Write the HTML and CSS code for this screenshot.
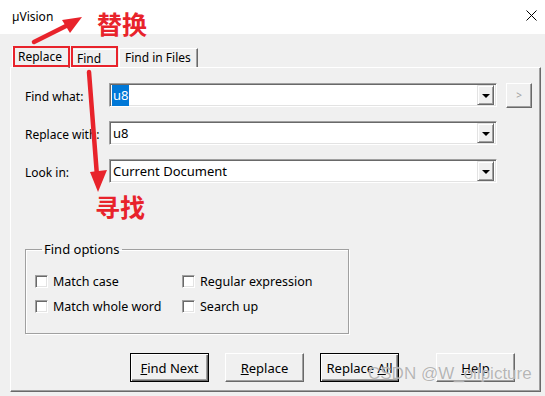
FILE: index.html
```html
<!DOCTYPE html>
<html lang="en">
<head>
    <meta charset="UTF-8">
    <title>µVision Replace</title>
    <link rel="stylesheet" href="styles.css">
</head>
<body>
    <div class="window">
        <div class="titlebar">
            <span class="title">µVision</span>
            <svg class="close" width="11" height="11" viewBox="0 0 11 11"><path d="M0.5 0.5L10.5 10.5M10.5 0.5L0.5 10.5" stroke="#000" stroke-width="1"/></svg>
        </div>
        <div class="tabs">
            <div class="tab active">Replace</div>
            <div class="tab tab-find">Find</div>
            <div class="tab">Find in Files</div>
        </div>
        <div class="panel">
            <div class="fields">
                <label>Find what:</label>
                <div class="combo"><span class="value"><span class="sel">u8</span></span><span class="drop"></span></div>
                <button class="more">&gt;</button>

                <label>Replace with:</label>
                <div class="combo"><span class="value">u8</span><span class="drop"></span></div>
                <span></span>

                <label>Look in:</label>
                <div class="combo"><span class="value">Current Document</span><span class="drop"></span></div>
                <span></span>
            </div>

            <fieldset class="options">
                <legend>Find options</legend>
                <div class="checks">
                    <div class="check"><span class="box"></span>Match case</div>
                    <div class="check"><span class="box"></span>Regular expression</div>
                    <div class="check"><span class="box"></span>Match whole word</div>
                    <div class="check"><span class="box"></span>Search up</div>
                </div>
            </fieldset>

            <div class="actions">
                <button class="btn default"><u>F</u>ind Next</button>
                <button class="btn"><u>R</u>eplace</button>
                <button class="btn default">Replace <u>A</u>ll</button>
                <button class="btn help"><u>H</u>elp</button>
            </div>
        </div>

        <!-- annotations drawn over the dialog -->
        <div class="note note-replace">替换</div>
        <div class="note note-find">寻找</div>
        <div class="redbox box-replace"></div>
        <div class="redbox box-find"></div>
        <svg class="arrows" width="545" height="396" viewBox="0 0 545 396">
            <line x1="34" y1="42" x2="68" y2="25" stroke="#e8232b" stroke-width="4.5" stroke-linecap="round"/>
            <polygon points="82,17 62,20 70,33" fill="#e8232b"/>
            <line x1="89" y1="72" x2="97" y2="176" stroke="#e8232b" stroke-width="4.5" stroke-linecap="round"/>
            <polygon points="98,192 90,172 107,170" fill="#e8232b"/>
        </svg>
        <div class="watermark">CSDN @W_oilpicture</div>
    </div>
</body>
</html>
```

FILE: styles.css
```css
body {
    margin: 0;
    font-family: "Noto Sans", "Noto Sans CJK SC", sans-serif;
    font-size: 12px;
    color: #000;
}
.window {
    position: relative;
    width: 545px;
    height: 396px;
    background-color: #f0f0f0;
    overflow: hidden;
}
.titlebar {
    height: 34px;
    background-color: #fff;
    display: flex;
    align-items: center;
    justify-content: space-between;
    padding: 0 8px 0 12px;
    box-sizing: border-box;
}
.title {
    font-size: 12px;
    margin-top: -2px;
}
.close {
    margin-top: -3px;
}
.tabs {
    display: flex;
    align-items: flex-end;
    height: 33px;
    padding-left: 12px;
    box-sizing: border-box;
}
.tab {
    height: 18px;
    line-height: 17px;
    padding: 0 6px 0 5px;
    border-top: 1px solid #fff;
    border-left: 1px solid #fff;
    border-right: 1px solid #696969;
    box-shadow: inset -1px 0 0 #a0a0a0;
    margin-left: 1px;
}
.tab.active {
    width: 58px;
    box-sizing: border-box;
    height: 21px;
    line-height: 18px;
    margin-left: 0;
    margin-bottom: -1px;
    position: relative;
    background-color: #f0f0f0;
}
.tab-find {
    width: 47px;
    box-sizing: border-box;
}
.panel {
    margin-left: 10px;
    width: 531px;
    height: 325px;
    box-sizing: border-box;
    border-top: 1px solid #fff;
    border-left: 1px solid #fff;
    border-right: 1px solid #696969;
    border-bottom: 1px solid #696969;
    box-shadow: inset -1px -1px 0 #a0a0a0;
    padding: 15px 0 0 14px;
}
.fields {
    display: grid;
    grid-template-columns: 75px 388px 26px;
    grid-auto-rows: 24px;
    column-gap: 9px;
    row-gap: 14px;
    align-items: center;
}
.fields label {
    margin-top: 2px;
    white-space: nowrap;
}
.combo {
    height: 24px;
    box-sizing: border-box;
    background-color: #fff;
    border-top: 1px solid #a0a0a0;
    border-left: 1px solid #a0a0a0;
    border-right: 1px solid #fff;
    border-bottom: 1px solid #fff;
    box-shadow: inset 1px 1px 0 #696969, inset -1px -1px 0 #e3e3e3;
    display: flex;
    align-items: center;
    justify-content: space-between;
    padding: 2px 2px 2px 3px;
}
.value {
    font-size: 13px;
}
.sel {
    background-color: #0078d7;
    color: #fff;
    padding: 1px 1px 2px;
    margin-left: -1px;
}
.drop {
    width: 17px;
    height: 20px;
    box-sizing: border-box;
    background-color: #f0f0f0;
    border-top: 1px solid #e3e3e3;
    border-left: 1px solid #e3e3e3;
    border-right: 1px solid #696969;
    border-bottom: 1px solid #696969;
    box-shadow: inset 1px 1px 0 #fff, inset -1px -1px 0 #a0a0a0;
    display: flex;
    align-items: center;
    justify-content: center;
}
.drop::after {
    content: "";
    border-left: 4px solid transparent;
    border-right: 4px solid transparent;
    border-top: 4px solid #000;
    margin-top: 1px;
}
.more {
    width: 26px;
    height: 25px;
    margin: 0;
    padding: 0;
    font: inherit;
    font-size: 10px;
    color: #a0a0a0;
    background-color: #f0f0f0;
    border-top: 1px solid #fff;
    border-left: 1px solid #fff;
    border-right: 1px solid #696969;
    border-bottom: 1px solid #696969;
    box-shadow: inset -1px -1px 0 #a0a0a0;
}
.options {
    width: 324px;
    height: 94px;
    box-sizing: border-box;
    margin: 57px 0 0 0;
    padding: 11px 0 0 9px;
    border: 1px solid #a0a0a0;
    box-shadow: inset 1px 1px 0 #fff, 1px 1px 0 #fff;
}
.options legend {
    padding: 0 2px;
    margin-left: 7px;
    font-size: 13px;
    line-height: 18px;
}
.checks {
    display: grid;
    grid-template-columns: 147px auto;
    grid-auto-rows: 25px;
    align-items: center;
    font-size: 12.5px;
}
.check {
    display: flex;
    align-items: center;
}
.box {
    width: 13px;
    height: 13px;
    box-sizing: border-box;
    background-color: #fff;
    border-top: 1px solid #a0a0a0;
    border-left: 1px solid #a0a0a0;
    border-right: 1px solid #fff;
    border-bottom: 1px solid #fff;
    box-shadow: inset 1px 1px 0 #696969, inset -1px -1px 0 #e3e3e3;
    margin-right: 5px;
}
.actions {
    display: flex;
    gap: 16px;
    margin: 19px 0 0 105px;
}
.btn {
    width: 79px;
    height: 29px;
    margin: 0;
    padding: 0;
    font: inherit;
    font-size: 13px;
    color: #000;
    background-color: #f0f0f0;
    border-top: 1px solid #fff;
    border-left: 1px solid #fff;
    border-right: 1px solid #696969;
    border-bottom: 1px solid #696969;
    box-shadow: inset -1px -1px 0 #a0a0a0;
}
.btn.default {
    border: 1px solid #000;
    box-shadow: inset 1px 1px 0 #fff, inset -1px -1px 0 #696969, inset -2px -2px 0 #a0a0a0;
}
.btn.help {
    margin-left: 21px;
}
.note {
    position: absolute;
    font-family: "Noto Sans CJK SC", sans-serif;
    font-weight: bold;
    font-size: 25px;
    line-height: 25px;
    color: #e8232b;
}
.note-replace {
    left: 97px;
    top: 11px;
}
.note-find {
    left: 95px;
    top: 194px;
}
.redbox {
    position: absolute;
    border: 2px solid #e8232b;
    box-sizing: border-box;
    height: 21px;
    top: 46px;
}
.box-replace {
    left: 13px;
    width: 57px;
}
.box-find {
    left: 71px;
    width: 47px;
}
.arrows {
    position: absolute;
    left: 0;
    top: 0;
}
.watermark {
    position: absolute;
    left: 368px;
    top: 364px;
    font-family: "Liberation Sans", sans-serif;
    font-size: 17px;
    color: rgba(150, 150, 150, 0.7);
    text-shadow: 0 0 1px #fff;
}
```
